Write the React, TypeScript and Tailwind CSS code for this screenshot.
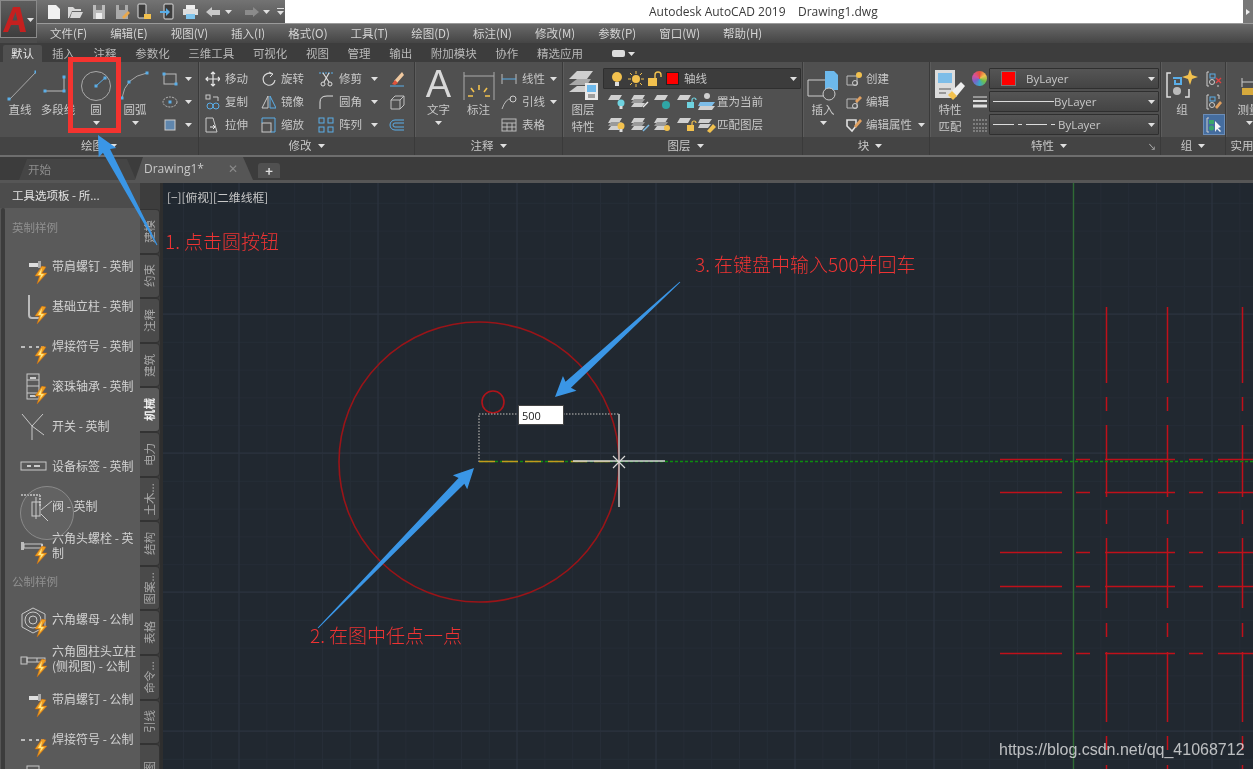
import React from 'react';

const G = '#c9c9c9';
const B = '#5aaee8';
const Y = '#f2c14e';

function Ic({ w = 16, h = 16, children }: { w?: number; h?: number; children: React.ReactNode }) {
  return (
    <svg width={w} height={h} viewBox={`0 0 ${w} ${h}`} fill="none" stroke={G} strokeWidth="1" className="shrink-0">
      {children}
    </svg>
  );
}

function Caret({ className = '' }: { className?: string }) {
  return (
    <svg width="7" height="4" viewBox="0 0 7 4" className={`shrink-0 ${className}`}>
      <polygon points="0,0 7,0 3.5,4" fill="#e0e0e0" />
    </svg>
  );
}

const Dot = ({ x, y }: { x: number; y: number }) => <rect x={x - 1.5} y={y - 1.5} width="3" height="3" fill={B} stroke="none" />;

function Panel({ w, title, titleOffset, launcher, children }: { w: number; title: string; titleOffset?: number; launcher?: boolean; children: React.ReactNode }) {
  return (
    <div className="h-full flex flex-col shrink-0 border-r border-[#3a3a3a] shadow-[1px_0_0_#5c5c5c] relative" style={{ width: w }}>
      <div className="h-[75px] flex">{children}</div>
      <div className="h-[18px] bg-[#444444] flex items-center justify-center gap-[6px] text-[#c8c8c8] whitespace-nowrap" style={{ paddingLeft: titleOffset ?? 0 }}>
        <span>{title}</span>
        <Caret />
        {launcher && <span className="absolute right-[4px] bottom-[3px] text-[8px] leading-[10px] text-[#ccc]">↘</span>}
      </div>
    </div>
  );
}

function Big({ w = 38, label, caret, children }: { w?: number; label: React.ReactNode; caret?: boolean; children: React.ReactNode }) {
  return (
    <div className="flex flex-col items-center pt-[6px] shrink-0" style={{ width: w }}>
      <div className="h-[33px] flex items-center justify-center">{children}</div>
      <div className="leading-[17px] text-center text-[#c8c8c8] whitespace-nowrap">{label}</div>
      {caret && <Caret className="mt-[3px]" />}
    </div>
  );
}

function Rows({ className = '', children }: { className?: string; children: React.ReactNode }) {
  return <div className={`flex flex-col pt-[5px] shrink-0 ${className}`}>{children}</div>;
}

function Row({ icon, label, caret, w }: { icon: React.ReactNode; label?: string; caret?: boolean; w?: number }) {
  return (
    <div className="h-[23px] flex items-center gap-[5px] text-[#c8c8c8] whitespace-nowrap" style={{ width: w }}>
      {icon}
      {label && <span>{label}</span>}
      {caret && <Caret className="ml-auto" />}
    </div>
  );
}

function Dropdown({ w, children, dark }: { w: number; children: React.ReactNode; dark?: boolean }) {
  return (
    <div
      className={`h-[21px] flex items-center border border-[#2f2f2f] rounded-[1px] text-[#c8c8c8] ${dark ? 'bg-[#3c3c3c]' : 'bg-gradient-to-b from-[#555555] to-[#444444]'}`}
      style={{ width: w }}
    >
      {children}
      <Caret className="ml-auto mr-[3px]" />
    </div>
  );
}

function LayerIcon({ children, stacked }: { children: React.ReactNode; stacked?: boolean }) {
  return (
    <Ic w={22} h={18}>
      <polygon points="5,2 16,2 13,7 2,7" fill="#d0d0d0" stroke="none" />
      {stacked && <polygon points="5,6 16,6 13,10 2,10" fill="#9a9a9a" stroke="none" />}
      {stacked && <polygon points="5,10 16,10 13,14 2,14" fill="#d0d0d0" stroke="none" />}
      {children}
    </Ic>
  );
}

const Bulb = ({ c = Y, x = 15, y = 10 }: { c?: string; x?: number; y?: number }) => (
  <g>
    <circle cx={x} cy={y} r="3.5" fill={c} stroke="none" />
    <rect x={x - 1.5} y={y + 3} width="3" height="3" fill="#ddd" stroke="none" />
  </g>
);

const Lock = ({ c = Y, x = 12, y = 9 }: { c?: string; x?: number; y?: number }) => (
  <g>
    <rect x={x} y={y} width="7" height="6" fill={c} stroke="none" />
    <path d={`M${x + 5} ${y} v-2 a2 2 0 0 1 4 0`} stroke={c} strokeWidth="1.2" />
  </g>
);

function PaletteBolt() {
  return (
    <svg width="14" height="18" viewBox="0 0 14 18" className="absolute right-[1px] bottom-[1px]">
      <polygon points="8,0 1,10 5.5,10 3,18 13,7 8,7 12,1" fill="#f0a020" stroke="#c86a10" strokeWidth="0.5" />
      <polygon points="8,2 4,9 7,9 6,13 10,8 7,8" fill="#ffe680" />
    </svg>
  );
}

const paletteIcons: Record<string, React.ReactNode> = {
  screw: (
    <g>
      <rect x="14" y="14" width="10" height="4" fill="#ddd" stroke="none" />
      <rect x="23" y="12" width="3" height="7" fill="#aaa" stroke="none" />
    </g>
  ),
  post: <path d="M14 6 v20 q0 3 3 3 h8" strokeWidth="2" stroke="#bbb" />,
  weld: <path d="M6 18 h4 M14 18 h3 M21 18 h3 M26 18 h3" strokeWidth="1.5" stroke="#ddd" />,
  bearing: (
    <g>
      <rect x="12" y="5" width="12" height="25" />
      <path d="M12 11 h12 M12 24 h12 M12 17 h12" />
      <rect x="15" y="8" width="6" height="2" fill="#ccc" stroke="none" />
      <rect x="15" y="26" width="6" height="2" fill="#ccc" stroke="none" />
    </g>
  ),
  sw: <path d="M7 5 L17 17 L28 5 M17 17 V31 M17 17 L29 26" />,
  tag: (
    <g>
      <rect x="6" y="13" width="25" height="8" />
      <rect x="12" y="16" width="4" height="2" fill="#ccc" stroke="none" />
      <rect x="19" y="16" width="6" height="2" fill="#ccc" stroke="none" />
    </g>
  ),
  valve: (
    <g>
      <path d="M6 6 h19 M25 6 v12" strokeWidth="2" strokeDasharray="2 1" stroke="#aaa" />
      <rect x="17" y="13" width="8" height="14" />
      <path d="M21 8 v22 M26 21 l11 -9 M26 25 l7 7" />
    </g>
  ),
  bolt: (
    <g>
      <rect x="6" y="13" width="3" height="8" fill="#bbb" stroke="none" />
      <rect x="9" y="15" width="18" height="4" />
      <path d="M27 15 v4" strokeWidth="2" />
    </g>
  ),
  nut: (
    <g>
      <polygon points="7,12 18,6 30,12 30,25 18,31 7,25" />
      <circle cx="18" cy="18" r="8" />
      <circle cx="18" cy="18" r="4" />
    </g>
  ),
  hex: (
    <g>
      <rect x="6" y="15" width="6" height="7" />
      <rect x="12" y="16" width="18" height="4" />
      <path d="M22 16 v4" />
    </g>
  ),
  end: <rect x="12" y="4" width="12" height="30" />,
};

function PaletteItem({ icon, label, bolt = true }: { icon: string; label: React.ReactNode; bolt?: boolean }) {
  return (
    <div className="h-10 flex items-center shrink-0">
      <div className="relative w-[42px] h-[36px] shrink-0 ml-[2px]">
        <svg width="38" height="36" viewBox="0 0 38 36" fill="none" stroke="#c8c8c8" strokeWidth="1" className="absolute left-[8px] top-0">
          {paletteIcons[icon]}
        </svg>
        {bolt && <PaletteBolt />}
      </div>
      <div className="ml-[3px] w-[88px] text-[12px] text-[#d2d2d2] leading-[15px] -mt-[4px]">{label}</div>
    </div>
  );
}

const sideTabs = ['建模', '约束', '注释', '建筑', '机械', '电力', '土木...', '结构', '图案...', '表格', '命令...', '引线', '图'];

function Canvas() {
  const minorX = Array.from({ length: 40 }, (_, i) => 183.5 + i * 27.8);
  const minorY = Array.from({ length: 22 }, (_, i) => 175.5 + i * 27.8);
  const majorX = [239, 378, 517, 656, 795, 934, 1212];
  const majorY = [175, 314, 453, 592, 731];
  const redY = [459, 492, 552, 586, 653];
  const redX = [1106, 1167, 1242];
  const hSegs = [[1000, 1062], [1076, 1090], [1105, 1175], [1189, 1203], [1218, 1253]];
  const vSegs = [[307, 383], [397, 411], [425, 497], [510, 524], [538, 608], [623, 637], [652, 722], [736, 750], [765, 769]];
  return (
    <svg width="1090" height="586" viewBox="163 183 1090 586" className="absolute inset-0">
      {minorX.map((x) => <line key={x} x1={x} y1="183" x2={x} y2="769" stroke="#262d37" />)}
      {minorY.map((y) => <line key={y} x1="163" y1={y} x2="1253" y2={y} stroke="#262d37" />)}
      {majorX.map((x) => <line key={x} x1={x} y1="183" x2={x} y2="769" stroke="#2d3441" />)}
      {majorY.map((y) => <line key={y} x1="163" y1={y} x2="1253" y2={y} stroke="#2d3441" />)}
      <line x1="1073.5" y1="183" x2="1073.5" y2="769" stroke="#2f6b35" strokeWidth="1.4" />
      {redY.map((y) => hSegs.map(([a, b]) => <line key={`${y}-${a}`} x1={a} y1={y + 0.5} x2={b} y2={y + 0.5} stroke="#c0101a" strokeWidth="1.5" />))}
      {redX.map((x) => vSegs.map(([a, b]) => <line key={`${x}-${a}`} x1={x + 0.5} y1={a} x2={x + 0.5} y2={b} stroke="#c0101a" strokeWidth="1.5" />))}
      <line x1="480" y1="461.5" x2="1253" y2="461.5" stroke="#0c8c10" strokeDasharray="3 2" strokeWidth="1.5" />
      <circle cx="479" cy="462" r="140" stroke="#9a1418" fill="none" strokeWidth="1.6" />
      <circle cx="493" cy="402" r="11" stroke="#b0141a" fill="none" strokeWidth="1.6" />
      <path d="M479 462 V414 H619" stroke="#8e8e8e" fill="none" strokeDasharray="1.5 1.5" strokeWidth="1.6" />
      <line x1="479" y1="461.5" x2="619" y2="461.5" stroke="#c29a1c" strokeWidth="1.6" strokeDasharray="16 7" />
      <line x1="573" y1="461" x2="665" y2="461" stroke="#d4d4d4" strokeWidth="1.4" />
      <line x1="619" y1="414" x2="619" y2="507" stroke="#b8b8b8" strokeWidth="1.6" />
      <path d="M613 456 L625 468 M625 456 L613 468" stroke="#d8d8d8" strokeWidth="1.2" />
    </svg>
  );
}

function arrowPoints(tx: number, ty: number, hx: number, hy: number) {
  const dx = hx - tx;
  const dy = hy - ty;
  const len = Math.hypot(dx, dy);
  const ux = dx / len;
  const uy = dy / len;
  const nx = -uy;
  const ny = ux;
  const p = (back: number, side: number) => `${hx - ux * back + nx * side},${hy - uy * back + ny * side}`;
  return [p(len, 0.5), p(18, 4), p(20, 10), p(0, 0), p(20, -10), p(18, -4), p(len, -0.5)].join(' ');
}

export default function App() {
  return (
    <div className="relative w-[1253px] h-[769px] overflow-hidden flex flex-col bg-[#3c3c3c] text-[11.5px] leading-none blur-[0.4px] [font-family:'Noto_Sans_CJK_SC','Noto_Sans',sans-serif]">
      {/* title + menu */}
      <div className="flex h-[43px] shrink-0">
        <div className="w-[37px] flex flex-col shrink-0 bg-[#4c4c4c]">
          <div className="h-[38px] bg-gradient-to-b from-[#5e5e5e] to-[#3e3e3e] border border-[#8a8a8a] flex items-center relative">
            <svg width="26" height="28" viewBox="0 0 26 28" className="ml-[1px]">
              <path d="M1 27 L11 2 H18 L24 27 H18 L16.5 20 H9 L6 27 Z M10.5 15.5 H15.5 L13.5 7 Z" fill="#c5201f" />
            </svg>
            <Caret className="absolute right-[2px] top-[17px]" />
          </div>
        </div>
        <div className="flex-1 flex flex-col">
          <div className="h-[24px] flex bg-white border-b border-[#9a9a9a]">
            <div className="w-[248px] bg-gradient-to-b from-[#737373] to-[#555555] flex items-center">
              <div className="w-[9px]" />
              <Ic w={16} h={16}><path d="M2 1 H10 L14 5 V15 H2 Z" fill="#f0f0f0" stroke="none" /></Ic>
              <div className="w-[5px]" />
              <Ic w={17} h={16}><path d="M1 14 L1 3 H6 L8 5 H14 V7 H5 L2 14 Z M5 8 H16 L13 14 H3 Z" fill="#d8d8d8" stroke="none" /></Ic>
              <div className="w-[7px]" />
              <Ic w={16} h={16}><path d="M2 1 H14 V15 H2 Z" fill="#bbb" stroke="none" /><rect x="5" y="1" width="6" height="5" fill="#777" stroke="none" /><rect x="5" y="9" width="6" height="6" fill="#eee" stroke="none" /></Ic>
              <div className="w-[7px]" />
              <Ic w={16} h={16}><path d="M2 1 H14 V15 H2 Z" fill="#aaa" stroke="none" /><rect x="5" y="1" width="6" height="5" fill="#666" stroke="none" /><path d="M8 13 L14 7 L16 9 L10 15 Z" fill="#e9a84c" stroke="none" /></Ic>
              <div className="w-[5px]" />
              <Ic w={17} h={17}><rect x="3" y="1" width="8" height="14" rx="1" fill="#3c3c3c" stroke="#ddd" /><path d="M9 11 H16 V16 H9 Z" fill={Y} stroke="none" /></Ic>
              <div className="w-[7px]" />
              <Ic w={17} h={17}><rect x="5" y="1" width="9" height="15" rx="1" fill="#3c3c3c" stroke="#ddd" /><path d="M1 8 H7 V5 L11 9 L7 13 V10 H1 Z" fill={B} stroke="none" /></Ic>
              <div className="w-[6px]" />
              <Ic w={17} h={16}><rect x="4" y="1" width="9" height="4" fill="#eee" stroke="none" /><rect x="1" y="5" width="15" height="6" fill="#ddd" stroke="none" /><rect x="4" y="10" width="9" height="5" fill="#7fc4ec" stroke="none" /></Ic>
              <div className="w-[6px]" />
              <Ic w={17} h={14}><path d="M1 7 L7 2 V5 H15 V10 H7 V12 Z" fill="#c8c8c8" stroke="none" /></Ic>
              <Caret className="ml-[3px]" />
              <div className="w-[11px]" />
              <Ic w={17} h={14}><path d="M16 7 L10 2 V5 H2 V10 H10 V12 Z" fill="#8b8b8b" stroke="none" /></Ic>
              <Caret className="ml-[3px]" />
              <div className="w-[7px]" />
              <div className="flex flex-col items-center gap-[2px]"><div className="w-[7px] h-px bg-[#ddd]" /><Caret /></div>
            </div>
            <div className="flex-1 pl-[364px] flex items-center text-[12px] text-[#3a3a3a] whitespace-pre [font-family:'Open_Sans',sans-serif]">Autodesk AutoCAD 2019    Drawing1.dwg</div>
            <div className="w-[10px] bg-[#777777] flex items-center justify-center">
              <svg width="4" height="6" viewBox="0 0 4 6"><polygon points="0,0 4,3 0,6" fill="#eee" /></svg>
            </div>
          </div>
          <div className="flex-1 bg-gradient-to-b from-[#6a6a6a] to-[#454545] flex items-center pl-[13px] gap-[23px] text-[#d4d4d4] whitespace-nowrap">
            {['文件(F)', '编辑(E)', '视图(V)', '插入(I)', '格式(O)', '工具(T)', '绘图(D)', '标注(N)', '修改(M)', '参数(P)', '窗口(W)', '帮助(H)'].map((m) => (
              <span key={m}>{m}</span>
            ))}
          </div>
        </div>
      </div>

      {/* ribbon tabs */}
      <div className="h-[19px] shrink-0 bg-[#3d3d3d] flex items-end pl-[3px] text-[#b9b9b9]">
        <div className="h-[17px] w-[39px] bg-[#505050] rounded-t-[2px] flex items-center justify-center text-[#e6e6e6]">默认</div>
        <div className="h-[17px] flex items-center pl-[10px] gap-[18.6px] whitespace-nowrap">
          {['插入', '注释', '参数化', '三维工具', '可视化', '视图', '管理', '输出', '附加模块', '协作', '精选应用'].map((t) => (
            <span key={t}>{t}</span>
          ))}
          <span className="flex items-center gap-[3px] ml-[10px]">
            <span className="w-[13px] h-[7px] rounded-[2px] bg-[#dddddd] block" />
            <Caret />
          </span>
        </div>
      </div>

      {/* ribbon */}
      <div className="h-[93px] shrink-0 bg-[#505050] flex overflow-hidden">
        <Panel w={199} title="绘图">
          <div className="w-px" />
          <Big label="直线">
            <Ic w={32} h={32}><line x1="5" y1="31" x2="33" y2="2" stroke="#a8a8a8" /><Dot x={5} y={30} /><Dot x={32} y={3} /></Ic>
          </Big>
          <Big label="多段线">
            <Ic w={36} h={32}><path d="M5 22 H24 V8" stroke="#bbb" /><Dot x={5} y={22} /><Dot x={24} y={22} /><Dot x={24} y={8} /></Ic>
          </Big>
          <Big label="圆" caret>
            <Ic w={32} h={32}><circle cx="16" cy="17" r="14.5" stroke="#a8a8a8" /><line x1="16" y1="17" x2="26" y2="8" stroke={B} /><Dot x={16} y={17} /><Dot x={25} y={9} /></Ic>
          </Big>
          <Big w={40} label="圆弧" caret>
            <Ic w={32} h={32}><path d="M3 29 Q6 8 28 4" stroke="#a8a8a8" /><Dot x={3} y={29} /><Dot x={10} y={13} /><Dot x={28} y={4} /></Ic>
          </Big>
          <Rows className="pl-[7px] w-[40px]">
            <Row icon={<Ic><rect x="2" y="3" width="12" height="10" stroke="#bbb" /><Dot x={2} y={3} /><Dot x={14} y={13} /></Ic>} caret w={30} />
            <Row icon={<Ic><ellipse cx="8" cy="8" rx="7" ry="5" stroke="#bbb" strokeDasharray="2 1" /><Dot x={8} y={8} /></Ic>} caret w={30} />
            <Row icon={<Ic><rect x="3" y="3" width="10" height="10" fill="#5f86ad" stroke="#ccc" /></Ic>} caret w={30} />
          </Rows>
        </Panel>

        <Panel w={216} title="修改">
          <Rows className="pl-[6px] w-[62px]">
            <Row w={50} label="移动" icon={<Ic w={15}><path d="M8 1 V15 M1 8 H15 M6 3 L8 1 L10 3 M6 13 L8 15 L10 13 M3 6 L1 8 L3 10 M13 6 L15 8 L13 10" stroke="#e8e8e8" strokeWidth="1.2" /></Ic>} />
            <Row w={50} label="复制" icon={<Ic w={15}><rect x="1" y="1" width="4" height="4" /><circle cx="5" cy="12" r="3" stroke={B} /><circle cx="11" cy="12" r="3" stroke={B} /><path d="M8 3 H13 V7" /></Ic>} />
            <Row w={50} label="拉伸" icon={<Ic w={15}><path d="M1 1 H8 L12 15 H1 Z" /><path d="M5 10 H10 M8 8 L10 10 L8 12" stroke="#eee" /></Ic>} />
          </Rows>
          <Rows className="w-[57px]">
            <Row w={50} label="旋转" icon={<Ic w={15}><path d="M11 3 A6 6 0 1 0 14 9" stroke="#d8d8d8" strokeWidth="1.2" /><path d="M8 1 L12 3 L9 6" stroke="#d8d8d8" /></Ic>} />
            <Row w={50} label="镜像" icon={<Ic w={15}><path d="M7 2 L1 14 H7 Z" /><path d="M9 2 L15 14 H9 Z" stroke={B} /></Ic>} />
            <Row w={50} label="缩放" icon={<Ic w={15}><rect x="1" y="6" width="9" height="9" /><path d="M1 6 V1 H14 V15 H10" stroke={B} /></Ic>} />
          </Rows>
          <Rows className="w-[64px]">
            <Row w={60} label="修剪" caret icon={<Ic w={16}><path d="M1 2 H15" stroke={B} strokeDasharray="2 1" /><path d="M5 2 L11 11 M11 2 L6 11" stroke="#ddd" strokeWidth="1.2" /><circle cx="5" cy="13" r="2" stroke="#ddd" /><circle cx="12" cy="13" r="2" stroke="#ddd" /></Ic>} />
            <Row w={60} label="圆角" caret icon={<Ic w={16}><path d="M2 15 V8 Q2 2 9 2 H15" stroke="#ddd" /></Ic>} />
            <Row w={60} label="阵列" caret icon={<Ic w={16}><rect x="1" y="1" width="5" height="5" stroke={B} /><rect x="10" y="1" width="5" height="5" stroke={B} /><rect x="1" y="10" width="5" height="5" stroke={B} /><rect x="10" y="10" width="5" height="5" stroke={B} /></Ic>} />
          </Rows>
          <Rows className="pl-[7px]">
            <Row icon={<Ic><path d="M5 10 L13 1 L15 4 L8 12 Z" fill="#f0c9a0" stroke="none" /><path d="M3 13 L6 9 L9 12 L6 14 Z" fill="#e0533a" stroke="none" /><path d="M1 15 H15" stroke={B} /></Ic>} />
            <Row icon={<Ic><path d="M2 6 H11 V15 H2 Z M2 6 L6 2 H15 L11 6 M15 2 V11 L11 15" stroke="#c0c0c0" /></Ic>} />
            <Row icon={<Ic><path d="M15 3 H6 A5 5 0 0 0 6 13 H15 M15 6 H6 A2 2 0 0 0 6 10 H15" stroke={B} /></Ic>} />
          </Rows>
        </Panel>

        <Panel w={148} title="注释">
          <Big w={47} label="文字" caret>
            <span className="block h-[33px] text-[38px] leading-[33px] text-[#d8d8d8] [font-family:'Liberation_Sans',sans-serif]">A</span>
          </Big>
          <Big w={33} label="标注">
            <Ic w={32} h={32}>
              <path d="M1 3 V31 M31 3 V31 M1 7 H31" stroke="#aaa" />
              <path d="M16 16 V21 M8 19 L11 23 M24 19 L21 23 M5 27 H10 M22 27 H27" stroke={Y} strokeWidth="1.6" />
            </Ic>
          </Big>
          <Rows className="pl-[6px] w-[62px]">
            <Row w={55} label="线性" caret icon={<Ic><path d="M1 3 V13 M15 3 V13" stroke="#bbb" /><path d="M1 8 H15" stroke={B} /></Ic>} />
            <Row w={55} label="引线" caret icon={<Ic><path d="M1 15 Q5 4 10 5" stroke="#bbb" /><circle cx="12" cy="5" r="3" stroke="#ccc" /></Ic>} />
            <Row w={55} label="表格" icon={<Ic><rect x="1" y="2" width="14" height="12" stroke="#bbb" /><path d="M1 6 H15 M1 10 H15 M6 6 V14 M11 6 V14" stroke="#bbb" /></Ic>} />
          </Rows>
        </Panel>

        <Panel w={240} title="图层" titleOffset={6}>
          <Big w={40} label={<span className="block">图层<br />特性</span>}>
            <Ic w={32} h={32}>
              <polygon points="10,2 26,2 20,10 2,10" fill="#cfcfcf" stroke="none" />
              <polygon points="10,10 24,10 20,16 2,16" fill="#a8a8a8" stroke="none" />
              <polygon points="10,17 22,17 20,23 2,23" fill="#cfcfcf" stroke="none" />
              <rect x="18" y="14" width="13" height="17" fill="#e8e8e8" stroke="none" />
              <rect x="20" y="16" width="9" height="7" fill="#6db9ec" stroke="none" />
              <path d="M21 26 H28 M21 28 H28" stroke="#555" />
            </Ic>
          </Big>
          <div className="flex flex-col pt-[6px] w-[199px]">
            <Dropdown w={198} dark>
              <div className="w-[5px]" />
              <Ic w={16}><circle cx="8" cy="6" r="5" fill={Y} stroke="none" /><rect x="6" y="11" width="4" height="4" fill="#ddd" stroke="none" /></Ic>
              <div className="w-[3px]" />
              <Ic w={16}><circle cx="8" cy="8" r="4" fill={Y} stroke="none" /><path d="M8 0 V3 M8 13 V16 M0 8 H3 M13 8 H16 M2 2 L4 4 M12 12 L14 14 M14 2 L12 4 M2 14 L4 12" stroke={Y} /></Ic>
              <div className="w-[3px]" />
              <Ic w={15}><rect x="1" y="7" width="9" height="8" fill={Y} stroke="none" /><path d="M8 7 V4 A3 3 0 0 1 14 4 V6" stroke={Y} strokeWidth="1.4" /></Ic>
              <div className="w-[4px]" />
              <span className="w-[13px] h-[13px] bg-[#ff0000] border border-[#222] shrink-0" />
              <span className="ml-[5px]">轴线</span>
            </Dropdown>
            <div className="flex items-center h-[23px] mt-[1px]">
              <div className="w-[3px]" />
              <LayerIcon><Bulb c="#6fd3e0" /></LayerIcon>
              <div className="w-px" />
              <LayerIcon stacked><path d="M14 14 L19 9" stroke="#eee" strokeWidth="1.5" /></LayerIcon>
              <div className="w-px" />
              <LayerIcon><circle cx="14" cy="12" r="4" fill="#2fa5a5" stroke="none" /></LayerIcon>
              <div className="w-px" />
              <LayerIcon><Lock c="#6fd3e0" /></LayerIcon>
              <Ic w={20} h={20}>
                <circle cx="10" cy="4" r="3" fill="#cfcfcf" stroke="none" />
                <path d="M3 10 H18 L15 14 H1 Z" fill="#7dbde8" stroke="none" />
                <path d="M3 14 H18 L15 18 H1 Z" fill="#cfcfcf" stroke="none" />
              </Ic>
              <span className="text-[#c8c8c8]">置为当前</span>
            </div>
            <div className="flex items-center h-[23px]">
              <div className="w-[3px]" />
              <LayerIcon stacked><Bulb /></LayerIcon>
              <div className="w-px" />
              <LayerIcon stacked><path d="M14 15 L20 9" stroke="#7dbde8" strokeWidth="1.5" /></LayerIcon>
              <div className="w-px" />
              <LayerIcon stacked><circle cx="15" cy="12" r="3" fill={Y} stroke="none" /></LayerIcon>
              <div className="w-px" />
              <LayerIcon><Lock /></LayerIcon>
              <Ic w={20} h={20}>
                <path d="M3 4 H15 L12 8 H1 Z M3 9 H14 L11 13 H1 Z" fill="#cfcfcf" stroke="none" />
                <path d="M10 16 L16 9 L19 12 L13 18 Z" fill={Y} stroke="none" />
              </Ic>
              <span className="text-[#c8c8c8]">匹配图层</span>
            </div>
          </div>
        </Panel>

        <Panel w={127} title="块" titleOffset={8}>
          <Big w={40} label="插入" caret>
            <Ic w={32} h={32}>
              <path d="M1 11 H21 V27 H1 Z" stroke="#ccc" />
              <path d="M18 2 H27 L31 6 V21 H18 Z" fill="#6db9ec" stroke="none" />
              <circle cx="22" cy="25" r="6" stroke="#ccc" fill="#505050" />
            </Ic>
          </Big>
          <Rows className="pl-[2px] w-[21px]">
            <Row w={19} icon={<Ic w={18}><path d="M2 5 H12 V14 H2 Z" stroke="#bbb" /><circle cx="10" cy="12" r="2.5" stroke="#ccc" /><circle cx="14" cy="4" r="3" fill={Y} stroke="none" /></Ic>} />
            <Row w={19} icon={<Ic w={18}><path d="M2 5 H12 V14 H2 Z" stroke="#bbb" /><circle cx="10" cy="12" r="2.5" stroke="#ccc" /><path d="M10 7 L15 2 L17 4 L12 9 Z" fill="#e0a060" stroke="none" /></Ic>} />
            <Row w={19} icon={<Ic w={18}><path d="M2 3 H11 V9 L7 14 L2 9 Z" stroke="#e0e0e0" strokeWidth="1.6" /><path d="M9 9 L15 2 L17 4 L11 11 Z" fill="#e0a060" stroke="none" /></Ic>} />
          </Rows>
          <div className="flex flex-col pt-[5px] pl-[2px] text-[#c8c8c8] whitespace-nowrap">
            <span className="h-[23px] flex items-center">创建</span>
            <span className="h-[23px] flex items-center">编辑</span>
            <span className="h-[23px] flex items-center gap-[6px]">编辑属性<Caret /></span>
          </div>
        </Panel>

        <Panel w={231} title="特性" titleOffset={8} launcher>
          <Big w={40} label={<span className="block">特性<br />匹配</span>}>
            <Ic w={32} h={32}>
              <rect x="1" y="1" width="20" height="28" fill="#dcdcdc" stroke="none" />
              <rect x="4" y="4" width="14" height="10" fill="#7dbde8" stroke="none" />
              <path d="M5 20 H17 M5 24 H12" stroke="#555" />
              <path d="M16 24 L27 13 L31 17 L22 28 Z" fill="#eeeeee" stroke="none" />
              <path d="M14 26 L18 22 L23 27 L19 31 Z" fill={Y} stroke="none" />
            </Ic>
          </Big>
          <div className="flex flex-col pt-[5px] w-[19px] items-center">
            <div className="h-[23px] flex items-center">
              <div className="w-[15px] h-[15px] rounded-full bg-[conic-gradient(#e5533c,#f2c14e,#6fbf4a,#3aa6c9,#7a63c9,#d8509a,#e5533c)]" />
            </div>
            <div className="h-[23px] flex items-center">
              <Ic><path d="M1 3 H15" stroke="#ddd" /><path d="M1 7 H15" stroke="#ddd" strokeWidth="2" /><path d="M1 12 H15" stroke="#ddd" strokeWidth="3" /></Ic>
            </div>
            <div className="h-[23px] flex items-center">
              <Ic><path d="M1 3 H15 M1 7 H15 M1 11 H15 M1 14 H15" stroke="#aaa" strokeDasharray="2 1" /></Ic>
            </div>
          </div>
          <div className="flex flex-col gap-[2px] pt-[6px]">
            <Dropdown w={170}>
              <span className="w-[15px] h-[15px] bg-[#ff0000] border border-[#777] ml-[11px] shrink-0" />
              <span className="ml-[10px] [font-family:'Open_Sans',sans-serif]">ByLayer</span>
            </Dropdown>
            <Dropdown w={170}>
              <span className="w-[61px] h-px bg-[#dcdcdc] ml-[3px]" />
              <span className="[font-family:'Open_Sans',sans-serif]">ByLayer</span>
            </Dropdown>
            <Dropdown w={170}>
              <span className="w-[21px] h-px bg-[#dcdcdc] ml-[3px]" />
              <span className="w-[4px] h-px bg-[#dcdcdc] ml-[4px]" />
              <span className="w-[21px] h-px bg-[#dcdcdc] ml-[4px]" />
              <span className="w-[4px] h-px bg-[#dcdcdc] ml-[4px]" />
              <span className="ml-[3px] [font-family:'Open_Sans',sans-serif]">ByLayer</span>
            </Dropdown>
          </div>
        </Panel>

        <Panel w={65} title="组">
          <Big w={42} label="组">
            <Ic w={32} h={32}>
              <path d="M5 4 H1 V28 H5 M19 28 H23 V20" stroke="#ddd" strokeWidth="1.5" />
              <path d="M7 9 H15 V15 H9 V11" stroke={B} strokeWidth="2" />
              <circle cx="11" cy="22" r="4" fill="#bbb" stroke="none" />
              <polygon points="24,0 26,6 32,8 26,10 24,16 22,10 16,8 22,6" fill={Y} stroke="none" />
            </Ic>
          </Big>
          <div className="flex flex-col pt-[5px] items-center w-[22px]">
            <div className="h-[23px] flex items-center">
              <Ic><path d="M3 1 H1 V15 H3 M11 15 H13" stroke="#ccc" /><rect x="4" y="3" width="5" height="4" stroke={B} /><circle cx="6" cy="11" r="2.5" stroke="#ccc" /><path d="M10 7 L15 12 M15 7 L10 12" stroke="#e04040" strokeWidth="1.4" /></Ic>
            </div>
            <div className="h-[23px] flex items-center">
              <Ic><path d="M3 1 H1 V15 H3 M11 1 H13 V5" stroke="#ccc" /><rect x="4" y="3" width="5" height="4" stroke={B} /><circle cx="6" cy="11" r="2.5" stroke="#ccc" /><path d="M9 13 L14 7 L16 9 L11 15 Z" fill="#e0a060" stroke="none" /></Ic>
            </div>
            <div className="h-[21px] w-[22px] bg-[#456d9f] border border-[#6b8db8] flex items-center justify-center mt-px">
              <Ic w={16}><path d="M3 1 H1 V15 H3" stroke="#ccc" /><rect x="3" y="3" width="5" height="4" fill="#3aa66a" stroke="none" /><circle cx="5.5" cy="11" r="2.5" fill="#3aa66a" stroke="none" /><path d="M9 4 V15 L11 12 L14 15 L15 14 L12 11 L15 10 Z" fill="#f5f5f5" stroke="none" /></Ic>
            </div>
          </div>
        </Panel>

        <Panel w={46} title="实用" titleOffset={0}>
          <Big w={46} label="测量" caret>
            <Ic w={30} h={32}>
              <path d="M8 9 V18 M8 13 H30" stroke="#ccc" />
              <rect x="8" y="19" width="22" height="7" fill="#d6a93c" stroke="none" />
            </Ic>
          </Big>
        </Panel>
      </div>

      {/* file tabs */}
      <div className="h-[2px] shrink-0 bg-[#6e6e6e]" />
      <div className="h-[23px] shrink-0 bg-[#3c3c3c] flex items-end pl-[19px]">
        <div className="w-[117px] h-[21px] bg-[#454545] [clip-path:polygon(8px_0,108px_0,117px_100%,0_100%)] flex items-center pl-[9px] text-[#8e8e8e]">开始</div>
        <div className="w-[118px] h-[23px] -ml-px bg-[#565656] [clip-path:polygon(8px_0,108px_0,118px_100%,0_100%)] flex items-center pl-[9px] text-[#c8c8c8] text-[12px] [font-family:'Open_Sans',sans-serif]">
          Drawing1*
          <span className="ml-[24px] text-[#8a8a8a] text-[12px]">✕</span>
        </div>
        <div className="w-[22px] h-[15px] mb-[2px] ml-[5px] bg-[#505050] rounded-t-[3px] flex items-center justify-center text-[#ddd] text-[13px] font-bold">+</div>
      </div>
      <div className="h-[3px] shrink-0 bg-[#565656]" />

      {/* main */}
      <div className="flex-1 flex min-h-0">
        <div className="w-[163px] flex shrink-0 bg-[#2e2e2e]">
          <div className="w-[140px] flex flex-col bg-[#5a5a5a] relative overflow-hidden">
            <div className="h-[25px] shrink-0 bg-[#4c4c4c] flex items-center pl-[12px] text-[#e2e2e2] whitespace-nowrap">工具选项板 - 所...</div>
            <div className="flex-1 flex min-h-0">
              <div className="w-[5px] shrink-0 flex">
                <div className="w-[1px] bg-[#555]" />
                <div className="w-[4px] bg-[#3c3c3c] rounded-t-[2px]" />
              </div>
              <div className="flex-1 flex flex-col min-h-0 overflow-hidden">
                <div className="h-[39px] shrink-0 flex items-start pt-[14px] pl-[7px] text-[#8f8f8f]">英制样例</div>
                <PaletteItem icon="screw" label="带肩螺钉 - 英制" />
                <PaletteItem icon="post" label="基础立柱 - 英制" />
                <PaletteItem icon="weld" label="焊接符号 - 英制" />
                <PaletteItem icon="bearing" label="滚珠轴承 - 英制" />
                <PaletteItem icon="sw" label="开关 - 英制" bolt={false} />
                <PaletteItem icon="tag" label="设备标签 - 英制" bolt={false} />
                <PaletteItem icon="valve" label="阀 - 英制" bolt={false} />
                <PaletteItem icon="bolt" label="六角头螺栓 - 英制" />
                <div className="h-[33px] shrink-0 flex items-center pb-[4px] pl-[7px] text-[#8f8f8f]">公制样例</div>
                <PaletteItem icon="nut" label="六角螺母 - 公制" />
                <PaletteItem icon="hex" label={<>六角圆柱头立柱<br />(侧视图) - 公制</>} />
                <PaletteItem icon="screw" label="带肩螺钉 - 公制" />
                <PaletteItem icon="weld" label="焊接符号 - 公制" />
                <PaletteItem icon="end" label="" bolt={false} />
              </div>
            </div>
            <div className="absolute left-[20px] top-[303px] w-[54px] h-[54px] rounded-full border border-[#8a8a8a] bg-white/5" />
          </div>
          <div className="w-[20px] shrink-0 bg-[#3d3d3d] flex flex-col pt-[26px] overflow-hidden">
            {sideTabs.map((t) => (
              <div
                key={t}
                className={`h-[44.6px] shrink-0 rounded-r-[4px] border border-l-0 border-[#333] flex items-center justify-center ${t === '机械' ? 'bg-[#5a5a5a] text-[#f0f0f0] font-bold' : 'bg-[#4a4a4a] text-[#a8a8a8]'}`}
              >
                <span className="[writing-mode:vertical-rl] [text-orientation:sideways] rotate-180 whitespace-nowrap text-[11.5px]">{t}</span>
              </div>
            ))}
          </div>
        </div>
        <div className="flex-1 relative bg-[#212830] overflow-hidden">
          <Canvas />
          <div className="absolute left-[4px] top-[6px] text-[#c8c8c8] text-[11.8px] leading-[15px]">[−][俯视][二维线框]</div>
          <div className="absolute left-[355px] top-[222px] w-[46px] h-[20px] bg-white border border-[#444] flex items-center pl-[3px] text-[11px] text-[#222] [font-family:'Open_Sans',sans-serif]">500</div>
        </div>
      </div>

      {/* annotations over the screenshot */}
      <div className="absolute left-[68px] top-[57px] w-[53px] h-[76px] border-[5px] border-[#f4332f]" />
      <svg width="1253" height="769" viewBox="0 0 1253 769" className="absolute inset-0 pointer-events-none">
        <polygon points={arrowPoints(157, 245, 98, 135)} fill="#3a96e6" />
        <polygon points={arrowPoints(318, 628, 474, 468)} fill="#3a96e6" />
        <polygon points={arrowPoints(680, 282, 555, 397)} fill="#3a96e6" />
      </svg>
      <div className="absolute left-[165px] top-[231px] text-[19px] leading-[20px] font-light text-[#ee3333] whitespace-nowrap">1. 点击圆按钮</div>
      <div className="absolute left-[695px] top-[254px] text-[19px] leading-[20px] font-light text-[#ee3333] whitespace-nowrap">3. 在键盘中输入500并回车</div>
      <div className="absolute left-[310px] top-[625px] text-[19px] leading-[20px] font-light text-[#ee3333] whitespace-nowrap">2. 在图中任点一点</div>
      <div className="absolute left-[999px] top-[741px] text-[16px] leading-[18px] text-white/70 whitespace-nowrap [font-family:'Liberation_Sans',sans-serif]">https://blog.csdn.net/qq_41068712</div>
    </div>
  );
}
